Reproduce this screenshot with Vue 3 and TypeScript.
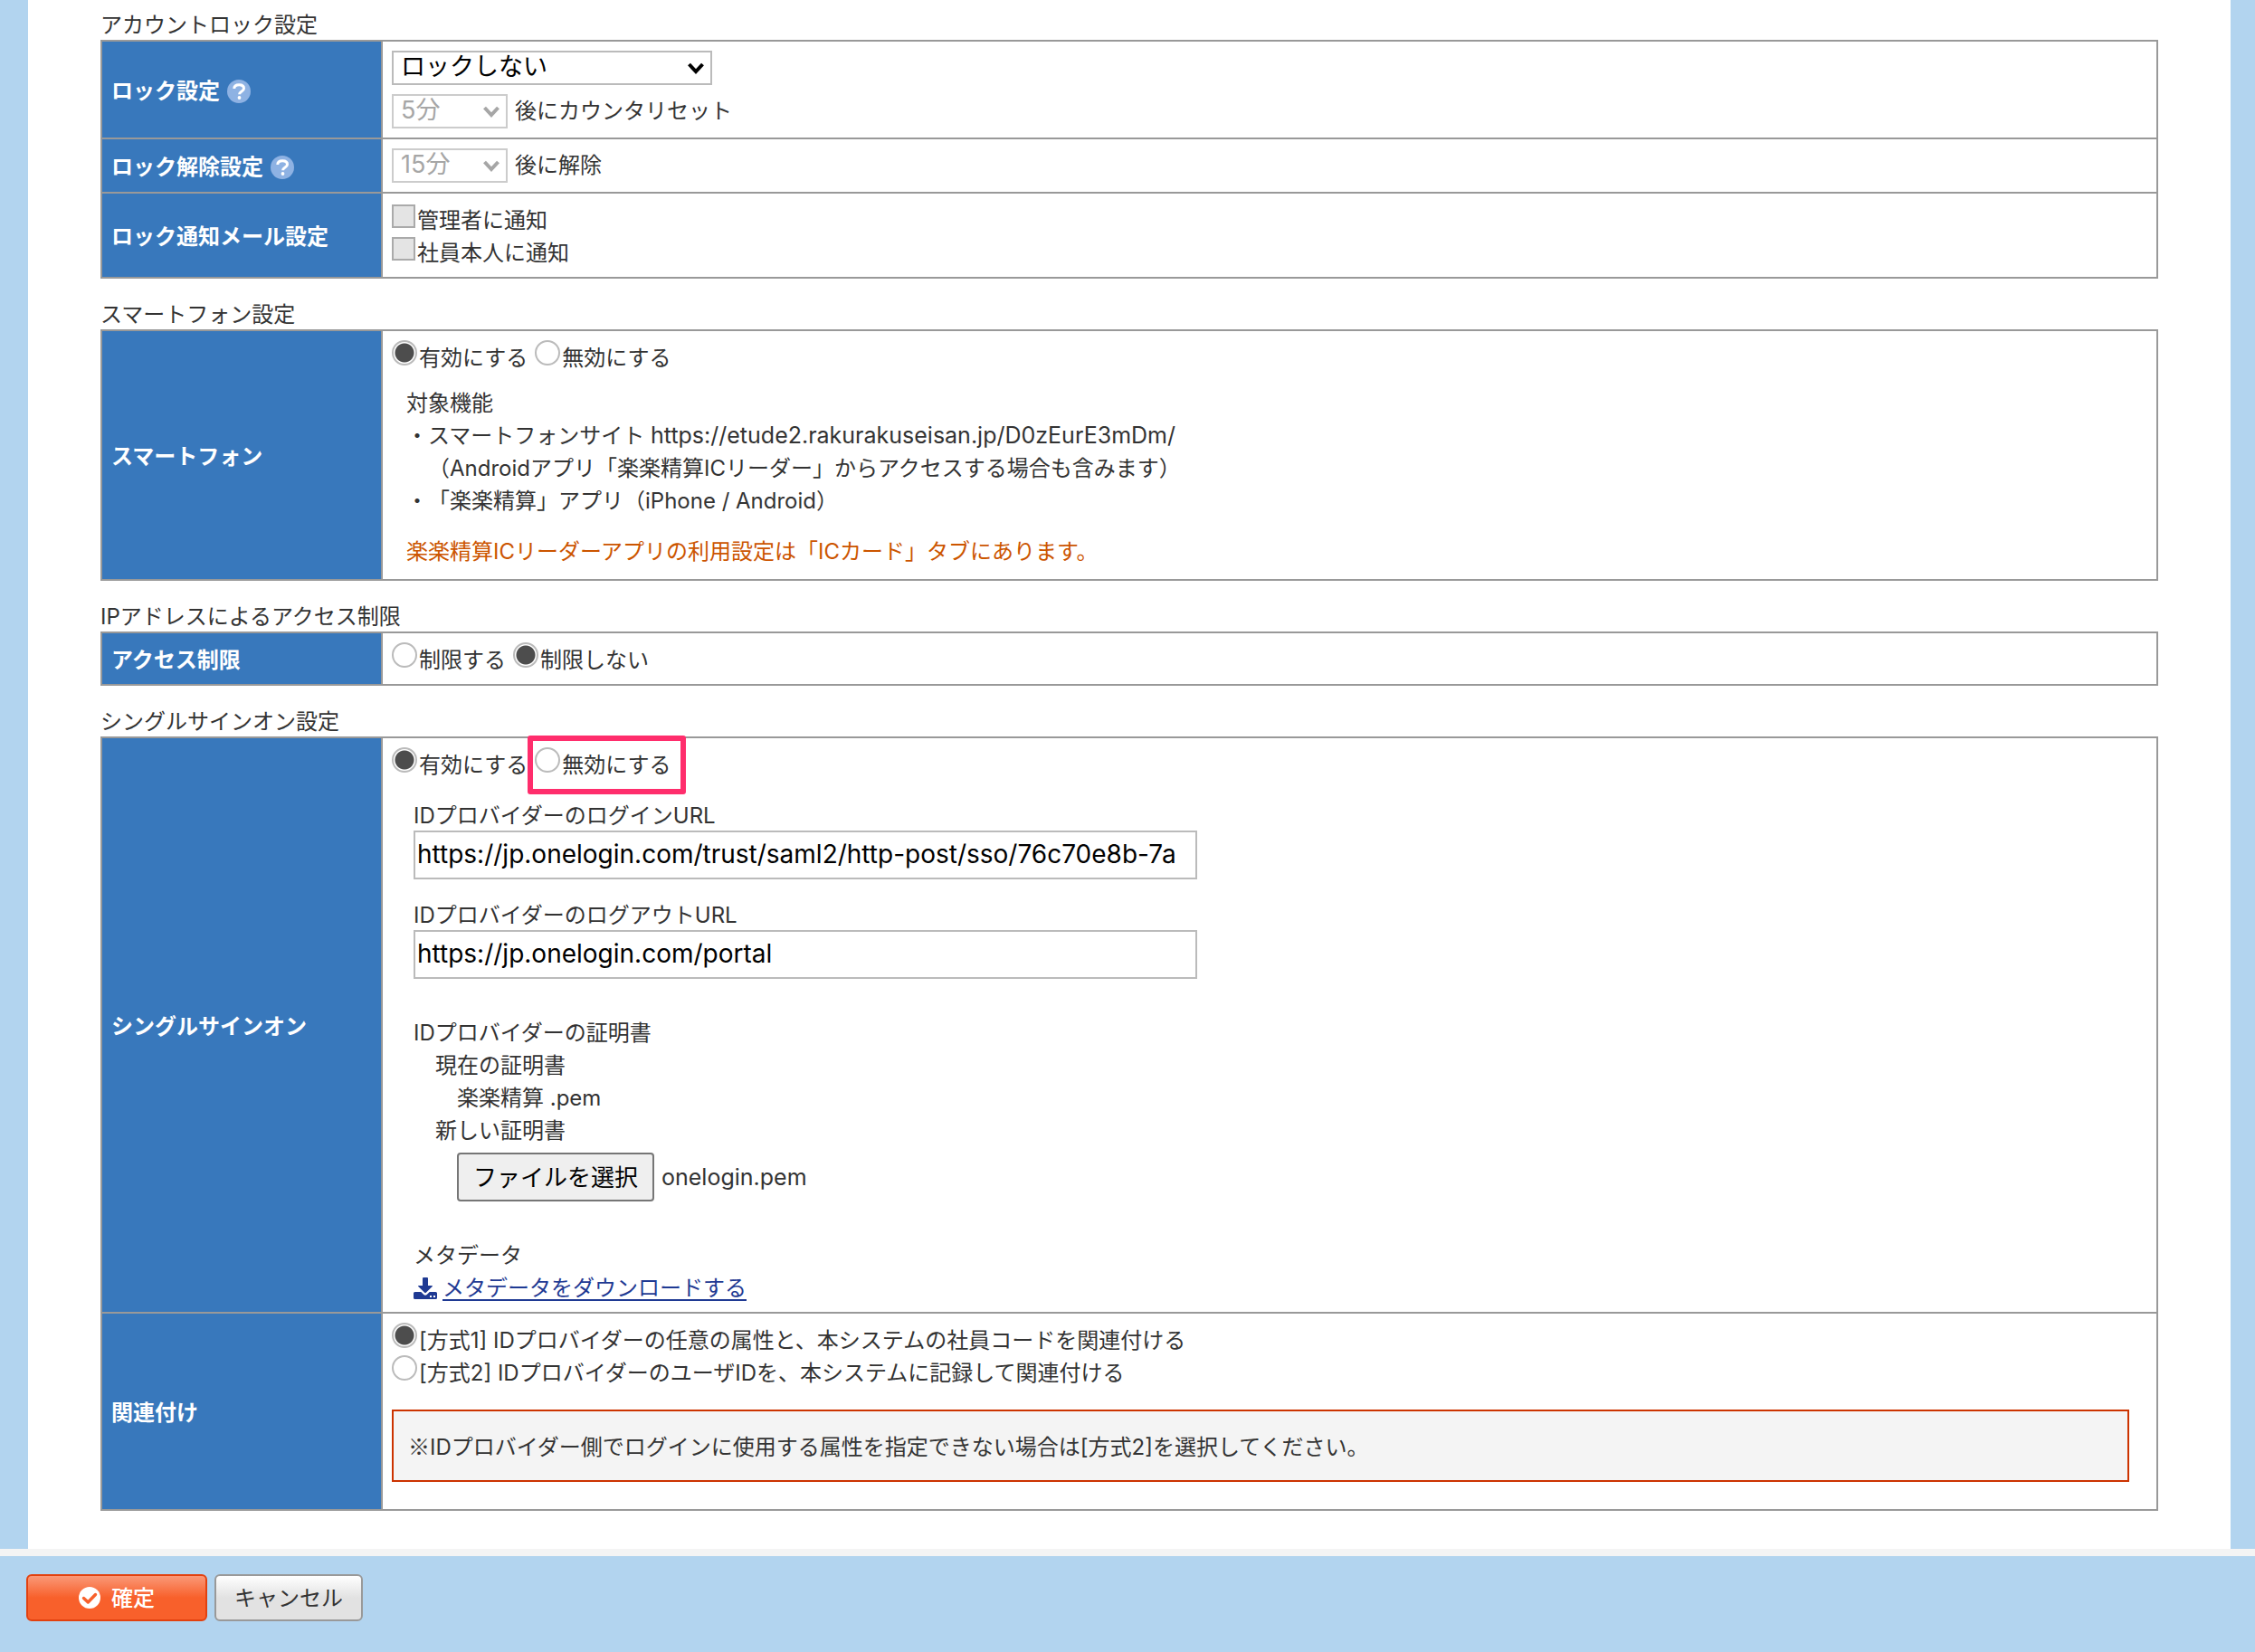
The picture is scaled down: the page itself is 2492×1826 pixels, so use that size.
<script setup lang="ts">
import { ref } from 'vue'

const lockMode = ref('none')
const counterReset = ref('5')
const lockRelease = ref('15')
const notifyAdmin = ref(false)
const notifyEmployee = ref(false)
const smartphone = ref('on')
const ipRestriction = ref('off')
const sso = ref('on')
const loginUrl = ref('https://jp.onelogin.com/trust/saml2/http-post/sso/76c70e8b-7a')
const logoutUrl = ref('https://jp.onelogin.com/portal')
const linkMethod = ref('1')
const certName = ref('onelogin.pem')
const certInput = ref<HTMLInputElement | null>(null)

function onCertChange(event: Event): void {
  const file = (event.target as HTMLInputElement).files?.[0]
  if (file) certName.value = file.name
}
</script>

<template>
  <form class="page" @submit.prevent>
    <main class="panel">
      <section>
        <h2>アカウントロック設定</h2>
        <table>
          <tbody>
            <tr>
              <th scope="row">
                <div class="head">
                  ロック設定
                  <svg class="help" viewBox="0 0 26 26" aria-hidden="true">
                    <circle cx="13" cy="13" r="13" fill="#8eb2e3" />
                    <path d="M7.8 10C7.8 7 10 5.800 13.200 5.800s5.300 1.400 5.300 4c0 3.400-4.900 3-4.900 6.500" fill="none" stroke="#fff" stroke-width="3" />
                    <circle cx="13.500" cy="20" r="1.900" fill="#fff" />
                  </svg>
                </div>
              </th>
              <td>
                <div class="stack">
                  <div class="field">
                    <span class="select wide">
                      <select v-model="lockMode" aria-label="ロック設定">
                        <option value="none">ロックしない</option>
                      </select>
                      <svg viewBox="0 0 20 14" aria-hidden="true"><path d="M2.5 3 10 11l7.5-8" /></svg>
                    </span>
                  </div>
                  <div class="field">
                    <span class="select">
                      <select id="counter" v-model="counterReset" disabled>
                        <option value="5">5分</option>
                      </select>
                      <svg viewBox="0 0 20 14" aria-hidden="true"><path d="M2.5 3 10 11l7.5-8" /></svg>
                    </span>
                    <label for="counter">後にカウンタリセット</label>
                  </div>
                </div>
              </td>
            </tr>
            <tr>
              <th scope="row">
                <div class="head">
                  ロック解除設定
                  <svg class="help" viewBox="0 0 26 26" aria-hidden="true">
                    <circle cx="13" cy="13" r="13" fill="#8eb2e3" />
                    <path d="M7.8 10C7.8 7 10 5.800 13.200 5.800s5.300 1.400 5.300 4c0 3.400-4.900 3-4.900 6.500" fill="none" stroke="#fff" stroke-width="3" />
                    <circle cx="13.500" cy="20" r="1.900" fill="#fff" />
                  </svg>
                </div>
              </th>
              <td>
                <div class="field">
                  <span class="select">
                    <select id="release" v-model="lockRelease" disabled>
                      <option value="15">15分</option>
                    </select>
                    <svg viewBox="0 0 20 14" aria-hidden="true"><path d="M2.5 3 10 11l7.5-8" /></svg>
                  </span>
                  <label for="release">後に解除</label>
                </div>
              </td>
            </tr>
            <tr>
              <th scope="row">ロック通知メール設定</th>
              <td>
                <label class="choice"><input v-model="notifyAdmin" type="checkbox" disabled />管理者に通知</label>
                <label class="choice"><input v-model="notifyEmployee" type="checkbox" disabled />社員本人に通知</label>
              </td>
            </tr>
          </tbody>
        </table>
      </section>

      <section>
        <h2>スマートフォン設定</h2>
        <table>
          <tbody>
            <tr>
              <th scope="row">スマートフォン</th>
              <td>
                <div class="choices">
                  <label class="choice"><input v-model="smartphone" type="radio" name="smartphone" value="on" />有効にする</label>
                  <label class="choice"><input v-model="smartphone" type="radio" name="smartphone" value="off" />無効にする</label>
                </div>
                <div class="features">
                  <p>対象機能</p>
                  <p>・スマートフォンサイト <span class="latin">https://etude2.rakurakuseisan.jp/D0zEurE3mDm/</span></p>
                  <p>　（Androidアプリ「楽楽精算ICリーダー」からアクセスする場合も含みます）</p>
                  <p>・「楽楽精算」アプリ（iPhone / Android）</p>
                  <p class="caution">楽楽精算ICリーダーアプリの利用設定は「ICカード」タブにあります。</p>
                </div>
              </td>
            </tr>
          </tbody>
        </table>
      </section>

      <section>
        <h2>IPアドレスによるアクセス制限</h2>
        <table>
          <tbody>
            <tr>
              <th scope="row">アクセス制限</th>
              <td>
                <div class="choices">
                  <label class="choice"><input v-model="ipRestriction" type="radio" name="ip" value="on" />制限する</label>
                  <label class="choice"><input v-model="ipRestriction" type="radio" name="ip" value="off" />制限しない</label>
                </div>
              </td>
            </tr>
          </tbody>
        </table>
      </section>

      <section>
        <h2>シングルサインオン設定</h2>
        <table>
          <tbody>
            <tr>
              <th scope="row">シングルサインオン</th>
              <td>
                <div class="choices">
                  <label class="choice"><input v-model="sso" type="radio" name="sso" value="on" />有効にする</label>
                  <label class="choice marked"><input v-model="sso" type="radio" name="sso" value="off" />無効にする</label>
                </div>
                <div class="provider">
                  <div class="url">
                    <label for="login-url">IDプロバイダーのログインURL</label>
                    <input id="login-url" v-model="loginUrl" type="text" />
                  </div>
                  <div class="url">
                    <label for="logout-url">IDプロバイダーのログアウトURL</label>
                    <input id="logout-url" v-model="logoutUrl" type="text" />
                  </div>
                  <div class="cert">
                    <p>IDプロバイダーの証明書</p>
                    <div class="indent">
                      <p>現在の証明書</p>
                      <p class="indent">楽楽精算 .pem</p>
                      <p>新しい証明書</p>
                      <div class="indent file">
                        <button type="button" class="choose" @click="certInput?.click()">ファイルを選択</button>
                        <input ref="certInput" type="file" accept=".pem" hidden @change="onCertChange" />
                        <span class="latin">{{ certName }}</span>
                      </div>
                    </div>
                  </div>
                  <div class="meta">
                    <p>メタデータ</p>
                    <div class="download">
                      <svg viewBox="0 0 26 24" aria-hidden="true">
                        <path fill="#1f3a93" d="M10 1q0-1 1-1h4q1 0 1 1v8h4.3q1.2 0 .4.9l-6.900 6.900q-.8.7-1.600 0L5.300 9.900q-.8-.9.4-.9H10z" />
                        <path fill="#1f3a93" fill-rule="evenodd" d="M1.5 16h6.800l3 3q1.700 1.500 3.400 0l3-3h6.800q1.500 0 1.500 1.500v5q0 1.500-1.500 1.500h-23Q0 24 0 22.500v-5Q0 16 1.500 16zM18 20v2h2v-2zm4 0v2h2v-2z" />
                      </svg>
                      <a href="#metadata">メタデータをダウンロードする</a>
                    </div>
                  </div>
                </div>
              </td>
            </tr>
            <tr>
              <th scope="row">関連付け</th>
              <td>
                <label class="choice"><input v-model="linkMethod" type="radio" name="link" value="1" />[方式1] IDプロバイダーの任意の属性と、本システムの社員コードを関連付ける</label>
                <label class="choice"><input v-model="linkMethod" type="radio" name="link" value="2" />[方式2] IDプロバイダーのユーザIDを、本システムに記録して関連付ける</label>
                <p class="notice"><span class="mark">※</span>IDプロバイダー側でログインに使用する属性を指定できない場合は[方式2]を選択してください。</p>
              </td>
            </tr>
          </tbody>
        </table>
      </section>
    </main>

    <footer class="actions">
      <button type="submit" class="btn primary">
        <svg viewBox="0 0 24 24" aria-hidden="true">
          <circle cx="12" cy="12" r="12" fill="#fff" />
          <path d="M5.5 12.5 10.3 17l8.200-8.500" fill="none" stroke="#f8602b" stroke-width="3.4" stroke-linecap="round" stroke-linejoin="round" />
        </svg>
        <span>確定</span>
      </button>
      <button type="button" class="btn"><span>キャンセル</span></button>
    </footer>
  </form>
</template>

<style>
body {
  margin: 0;
  background: #b2d4ef;
}
</style>

<style scoped>
.page,
.page input,
.page select,
.page button {
  font-family: Inter, "Noto Sans CJK JP", sans-serif;
}

.page {
  font-size: 24px;
  line-height: 36px;
  color: #333;
  text-spacing-trim: space-all;
}

.panel {
  display: flex;
  flex-direction: column;
  gap: 20px;
  margin: 0 27px 0 31px;
  padding: 8px 80px 42px;
  background: #fff;
}

h2,
p {
  margin: 0;
  font-size: 24px;
  font-weight: 400;
}

h2,
.choice,
.url label,
.meta p,
.download {
  padding-top: 4px;
  line-height: 32px;
}

table {
  width: 100%;
  table-layout: fixed;
  border-collapse: collapse;
}

th,
td {
  box-sizing: border-box;
  border: 2px solid #999;
  padding: 10px;
}

th {
  width: 310px;
  padding: 12px 10px 8px;
  background: #3878bc;
  color: #fff;
  font-weight: 700;
  text-align: left;
  vertical-align: middle;
}

td {
  vertical-align: top;
}

.head {
  display: flex;
  align-items: center;
  gap: 8px;
}

.help {
  width: 26px;
  height: 26px;
}

.stack {
  display: flex;
  flex-direction: column;
  gap: 10px;
}

.field {
  display: flex;
  align-items: center;
  gap: 8px;
}

.select {
  position: relative;
  display: flex;
  width: 128px;
}

.select.wide {
  width: 354px;
}

.select select {
  appearance: none;
  box-sizing: border-box;
  width: 100%;
  height: 38px;
  padding: 0 8px 2px;
  border: 2px solid #bbb;
  border-radius: 0;
  background: #fff;
  color: #000;
  font-size: 27px;
  line-height: 32px;
}

.select select:disabled {
  border-color: #ccc;
  color: #a6a6a6;
  opacity: 1;
}

.select svg {
  position: absolute;
  top: 12px;
  right: 8px;
  width: 20px;
  height: 14px;
  fill: none;
  stroke: #000;
  stroke-width: 4;
  pointer-events: none;
}

.select select:disabled + svg {
  stroke: #a6a6a6;
}

.choices {
  display: flex;
  gap: 8px;
}

.choice {
  display: flex;
  gap: 2px;
}

.choice input {
  appearance: none;
  box-sizing: border-box;
  flex: none;
  width: 28px;
  height: 28px;
  margin: -4px 0 0;
  border: 2px solid #bbb;
  border-radius: 50%;
  background: #fff;
}

.choice input[type="radio"]:checked {
  background: radial-gradient(circle, #4d4d4d 10px, #fff 11px);
}

.choice input[type="checkbox"] {
  width: 26px;
  height: 26px;
  margin-top: -2px;
  border-color: #aaa;
  border-radius: 0;
  background: #e4e4e4;
}

.choice.marked {
  position: relative;
}

/* highlight frame around the option */
.choice.marked::after {
  content: "";
  position: absolute;
  inset: -13px -16px -16px -8px;
  border: 6px solid #ff2d6c;
  border-radius: 3px;
}

.latin {
  font-size: 25px;
  line-height: 24px;
}

.features {
  padding: 16px 16px 2px;
}

.caution {
  margin-top: 20px;
  color: #cc5500;
}

.provider {
  display: flex;
  flex-direction: column;
  gap: 20px;
  padding: 20px 24px 0;
}

.url {
  display: flex;
  flex-direction: column;
  align-items: flex-start;
}

.url input {
  box-sizing: border-box;
  width: 866px;
  max-width: 100%;
  height: 54px;
  margin: 0;
  padding: 0 2px 2px;
  border: 2px solid #bbb;
  color: #000;
  font-size: 28px;
}

.cert {
  margin: 22px 0 20px;
}

.indent {
  padding-left: 24px;
}

.file {
  display: flex;
  align-items: center;
  gap: 8px;
  padding-top: 6px;
}

.choose {
  height: 54px;
  padding: 0 16px 4px;
  border: 2px solid #767676;
  border-radius: 4px;
  background: #efefef;
  color: #000;
  font-size: 26px;
}

.download {
  display: flex;
  align-items: center;
  gap: 6px;
}

.download svg {
  width: 26px;
  height: 24px;
}

.download a {
  color: #1f3a93;
  text-underline-offset: 4px;
}

.notice {
  margin: 24px 20px 20px 0;
  padding: 22px 16px 18px;
  border: 2px solid #cc3300;
  background: #f4f4f4;
}

.mark {
  font-family: "Noto Sans CJK JP", sans-serif;
  line-height: 24px;
}

.actions {
  display: flex;
  gap: 8px;
  padding: 20px 29px 34px;
  border-top: 8px solid #f4f4f4;
}

.btn {
  display: flex;
  align-items: center;
  justify-content: center;
  gap: 12px;
  box-sizing: border-box;
  min-width: 164px;
  height: 52px;
  padding: 0 20px;
  border: 2px solid #999;
  border-radius: 6px;
  background: linear-gradient(#fff, #e2e2e2 50%);
  color: #333;
  font-size: 24px;
}

.btn span {
  padding-bottom: 4px;
}

.btn.primary {
  min-width: 200px;
  border-color: #e2410f;
  background: linear-gradient(#fa9877, #f8602b 50%);
  color: #fff;
  font-weight: 500;
}

.btn svg {
  width: 24px;
  height: 24px;
}
</style>
